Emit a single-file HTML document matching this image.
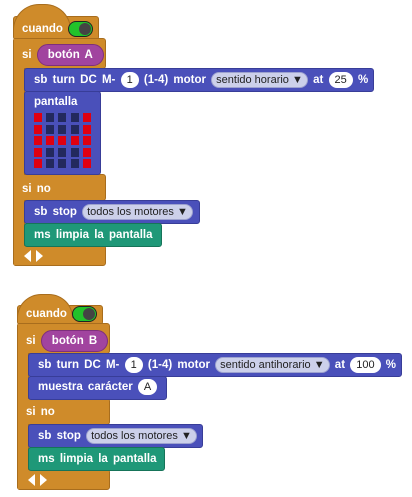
<!DOCTYPE html><html><head><style>
body{margin:0;width:412px;height:497px;background:#fff;position:relative;overflow:hidden;font-family:"Liberation Sans",sans-serif;font-weight:bold;font-size:11.5px;color:#fff}
.a{position:absolute;box-sizing:border-box}
.o{background:#cf8b2a;border:1px solid #a86d1d;border-radius:3px}
.b{background:#4a50ba;border:1px solid #383d98;border-radius:3px}
.t{background:#1f9878;border:1px solid #167459;border-radius:3px}
.tx{position:absolute;white-space:nowrap;word-spacing:2px;line-height:16px}
.p{display:inline-block;background:#a1449f;border:1px solid #7e2f7c;border-radius:12px;padding:3px 10px;line-height:14px}
.w{display:inline-block;background:#fff;color:#222;border-radius:9px;padding:1px 6px;font-weight:normal;font-size:11px;line-height:14px}
.d{display:inline-block;background:#ccd0ea;color:#222;border:1px solid #9da2cf;border-radius:9px;padding:0px 4px;font-weight:normal;font-size:11px;line-height:14px;word-spacing:0}
.tg{display:inline-block;width:23px;height:14px;background:#22c22a;border:1.5px solid #222;border-radius:8px;vertical-align:middle;position:relative}
.tg:after{content:"";position:absolute;right:1px;top:1px;width:12px;height:12px;border-radius:50%;background:#444}
.g{position:absolute;width:8px;height:9px}
.ar{position:absolute;width:0;height:0;border-top:6px solid transparent;border-bottom:6px solid transparent}
</style></head><body>
<!-- block 1 -->
<div class="a o" style="left:13px;top:16px;width:86px;height:24px"></div>
<div class="a" style="left:13px;top:4px;width:58px;height:26px;background:#cf8b2a;border:1px solid #a86d1d;border-bottom:none;border-radius:30px 30px 0 0"></div>
<div class="tx" style="left:22px;top:21px">cuando <span class="tg"></span></div>
<div class="a o" style="left:13px;top:38px;width:12px;height:228px"></div>
<div class="a o" style="left:13px;top:38px;width:93px;height:31px"></div>
<div class="a o" style="left:13px;top:174px;width:93px;height:27px"></div>
<div class="a o" style="left:13px;top:245px;width:93px;height:21px"></div>
<div class="a" style="left:14px;top:39px;width:10px;height:226px;background:#cf8b2a"></div>
<div class="tx" style="left:22px;top:44px">si <span class="p">botón A</span></div>
<div class="tx" style="left:22px;top:181px">si no</div>
<div class="ar" style="left:24px;top:250px;border-right:7px solid #fff"></div>
<div class="ar" style="left:36px;top:250px;border-left:7px solid #fff"></div>
<div class="a b" style="left:24px;top:68px;width:350px;height:24px"></div>
<div class="tx" style="left:34px;top:72px">sb turn DC M- <span class="w">1</span> (1-4) motor <span class="d">sentido horario ▼</span> at <span class="w">25</span> %</div>
<div class="a b" style="left:24px;top:91px;width:77px;height:84px"></div>
<div class="tx" style="left:34px;top:94px">pantalla</div>
<div id="m1" class="a" style="left:34px;top:113px;width:60px;height:56px"></div>
<div class="a b" style="left:24px;top:200px;width:176px;height:24px"></div>
<div class="tx" style="left:34px;top:204px">sb stop <span class="d">todos los motores ▼</span></div>
<div class="a t" style="left:24px;top:223px;width:138px;height:24px"></div>
<div class="tx" style="left:34px;top:227px">ms limpia la pantalla</div>
<!-- block 2 -->
<div class="a o" style="left:17px;top:305px;width:86px;height:20px"></div>
<div class="a" style="left:17px;top:294px;width:56px;height:24px;background:#cf8b2a;border:1px solid #a86d1d;border-bottom:none;border-radius:30px 30px 0 0"></div>
<div class="tx" style="left:26px;top:306px">cuando <span class="tg"></span></div>
<div class="a o" style="left:17px;top:323px;width:12px;height:167px"></div>
<div class="a o" style="left:17px;top:323px;width:93px;height:31px"></div>
<div class="a o" style="left:17px;top:398px;width:93px;height:27px"></div>
<div class="a o" style="left:17px;top:469px;width:93px;height:21px"></div>
<div class="a" style="left:18px;top:324px;width:10px;height:165px;background:#cf8b2a"></div>
<div class="tx" style="left:26px;top:330px">si <span class="p">botón B</span></div>
<div class="tx" style="left:26px;top:404px">si no</div>
<div class="ar" style="left:28px;top:474px;border-right:7px solid #fff"></div>
<div class="ar" style="left:40px;top:474px;border-left:7px solid #fff"></div>
<div class="a b" style="left:28px;top:353px;width:374px;height:24px"></div>
<div class="tx" style="left:38px;top:357px">sb turn DC M- <span class="w">1</span> (1-4) motor <span class="d">sentido antihorario ▼</span> at <span class="w">100</span> %</div>
<div class="a b" style="left:28px;top:376px;width:139px;height:24px"></div>
<div class="tx" style="left:38px;top:379px">muestra carácter <span class="w">A</span></div>
<div class="a b" style="left:28px;top:424px;width:175px;height:24px"></div>
<div class="tx" style="left:38px;top:428px">sb stop <span class="d">todos los motores ▼</span></div>
<div class="a t" style="left:28px;top:447px;width:137px;height:24px"></div>
<div class="tx" style="left:38px;top:451px">ms limpia la pantalla</div>
<script>
var pat=["10001","10001","11111","10001","10001"],m=document.getElementById("m1"),h="";
for(var r=0;r<5;r++)for(var c=0;c<5;c++)h+='<div class="g" style="left:'+(c*12.2)+'px;top:'+(r*11.6)+'px;background:'+(pat[r][c]=="1"?"#e00010":"#23295e")+'"></div>';
m.innerHTML=h;
</script>
</body></html>
